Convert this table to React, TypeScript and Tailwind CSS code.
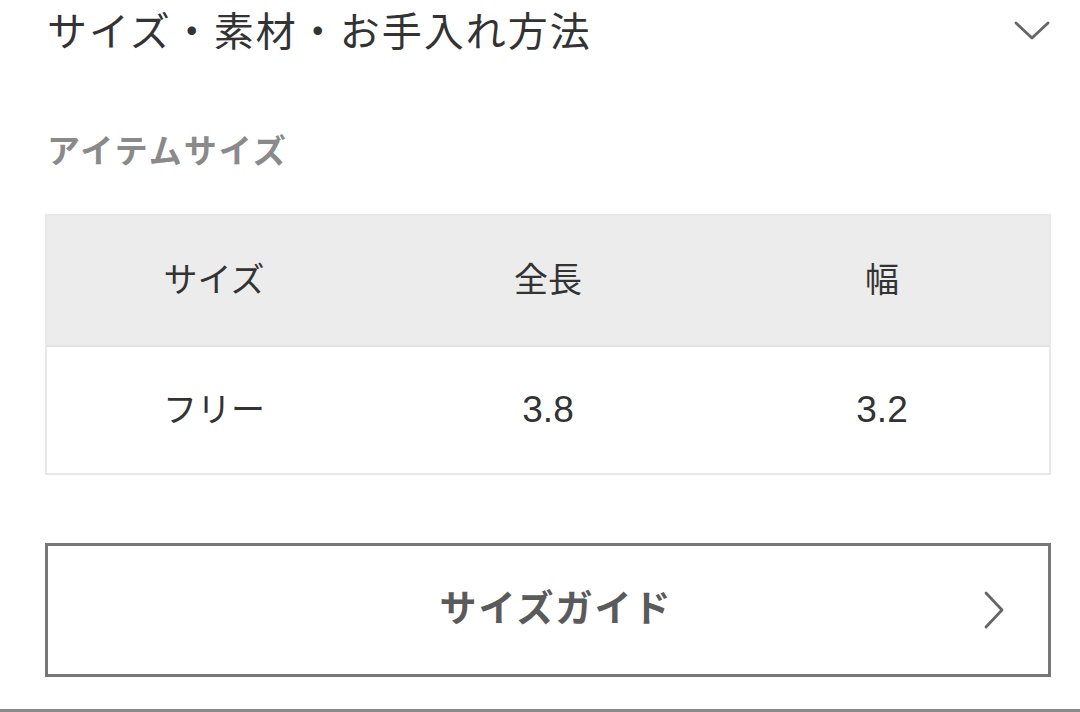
const ROWS = [{ size: 'フリー', length: '3.8', width: '3.2' }];

function Chevron({ dir, className }: { dir: 'down' | 'right'; className?: string }) {
  if (dir === 'down') {
    return (
      <svg width="36" height="20" viewBox="0 0 36 20" fill="none" className={className}>
        <polyline points="2,2 18,17 34,2" stroke="#666" strokeWidth="2.8" strokeLinecap="round" strokeLinejoin="round" />
      </svg>
    );
  }
  return (
    <svg width="22" height="38" viewBox="0 0 22 38" fill="none" className={className}>
      <polyline points="3,2 19,19 3,36" stroke="#666" strokeWidth="2.8" strokeLinecap="round" strokeLinejoin="round" />
    </svg>
  );
}

export default function App() {
  return (
    <div
      className="w-[1080px] h-[712px] overflow-hidden bg-white"
      style={{ fontFamily: '"Liberation Sans", "Noto Sans CJK JP", sans-serif' }}
    >
      <div className="pl-[45px] pr-[29px]">
        <div className="h-[64px] flex items-center justify-between">
          <h2 className="text-[40px] leading-none text-[#333] tracking-[2px] pl-[2px]">
            サイズ・素材・お手入れ方法
          </h2>
          <Chevron dir="down" className="mt-[-2px] mr-[1px]" />
        </div>

        <p className="mt-[71px] pl-[2px] text-[33px] leading-none font-bold text-[#8a8a8a] tracking-[2px]">
          アイテムサイズ
        </p>

        <div className="mt-[46px] border-2 border-[#e8e8e8]">
          <div className="grid grid-cols-3 h-[131px] bg-[#ececec] border-b-2 border-[#e2e2e2] items-center text-center text-[34px] text-[#333]">
            <span>サイズ</span>
            <span>全長</span>
            <span>幅</span>
          </div>
          {ROWS.map((row) => (
            <div key={row.size} className="grid grid-cols-3 h-[126px] items-center text-center text-[#333]">
              <span className="text-[34px]">{row.size}</span>
              <span className="text-[37px]">{row.length}</span>
              <span className="text-[37px]">{row.width}</span>
            </div>
          ))}
        </div>

        <button className="mt-[68px] w-full h-[134px] border-[3px] border-[#777] flex items-center relative bg-white">
          <span className="flex-1 pl-[16px] text-center text-[37px] font-bold text-[#5a5a5a] tracking-[2px]">
            サイズガイド
          </span>
          <Chevron dir="right" className="absolute right-[43px] top-1/2 -translate-y-1/2" />
        </button>
      </div>
      <div className="mt-[32px] border-t-[3px] border-[#8a8a8a]" />
    </div>
  );
}
